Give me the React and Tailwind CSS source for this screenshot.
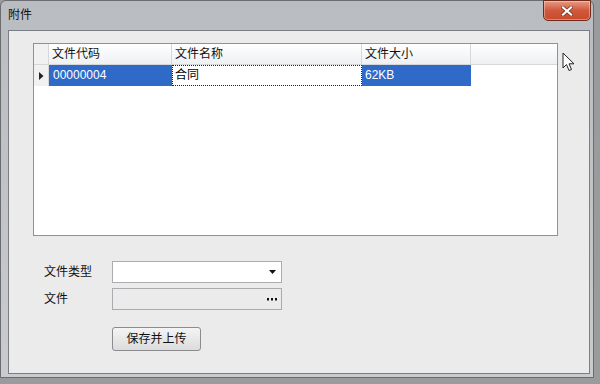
export default function App() {
  const font = { fontFamily: '"Liberation Sans", "Noto Sans CJK SC", sans-serif' };
  return (
    <div className="w-[600px] h-[384px] bg-[#9a9b9d] relative overflow-hidden" style={font}>
      <div className="w-[594px] h-[378px] rounded-t-[6px] border border-[#6a6c70] bg-gradient-to-b from-[#b9bcc0] to-[#c9cbce] flex flex-col">
        {/* title bar */}
        <div className="h-[29px] flex items-start">
          <span className="ml-[7px] mt-[6px] text-[12px] text-[#111] leading-[16px]">附件</span>
          <div className="ml-auto mr-[2px] -mt-[1px] w-[48px] h-[21px] rounded-b-[5px] border border-[#6e2a1c] bg-gradient-to-b from-[#e59a84] via-[#d0583b] to-[#c84a2c] flex items-center justify-center shadow-[inset_0_0_0_1px_rgba(255,255,255,0.35)]">
            <svg width="12" height="10" viewBox="0 0 12 10">
              <path d="M2 1.5 L10 8.5 M10 1.5 L2 8.5" stroke="#7a3020" strokeWidth="3.6" strokeLinecap="square" />
              <path d="M2 1.5 L10 8.5 M10 1.5 L2 8.5" stroke="#ffffff" strokeWidth="2.2" strokeLinecap="square" />
            </svg>
          </div>
        </div>
        {/* client area */}
        <div className="ml-[7px] w-[582px] h-[344px] bg-[#ebebec] border border-[#7b7e82] flex flex-col">
          {/* grid */}
          <div className="ml-[24px] mt-[12px] w-[525px] h-[193px] bg-white border border-[#8e9297] flex flex-col text-[12px]">
            <div className="h-[21px] flex bg-gradient-to-b from-[#ffffff] to-[#eef0f2] border-b border-[#d5d7da]">
              <div className="w-[15px] border-r border-[#d5d7da] bg-[#f1f1f1]" />
              <div className="w-[123px] border-r border-[#d5d7da] pl-[3px] leading-[20px] text-[#111]">文件代码</div>
              <div className="w-[190px] border-r border-[#d5d7da] pl-[3px] leading-[20px] text-[#111]">文件名称</div>
              <div className="w-[109px] border-r border-[#d5d7da] pl-[3px] leading-[20px] text-[#111]">文件大小</div>
              <div className="flex-1" />
            </div>
            <div className="h-[21px] flex">
              <div className="w-[15px] bg-[#f1f1f1] border-r border-[#d5d7da] flex items-center justify-center">
                <svg width="5" height="8" viewBox="0 0 5 8"><path d="M0 0 L4.5 4 L0 8 Z" fill="#222" /></svg>
              </div>
              <div className="w-[123px] bg-[#2f6ac8] text-white pl-[4px] leading-[21px]">00000004</div>
              <div className="w-[190px] bg-white border border-dotted border-[#222] text-black pl-[2px] leading-[19px]">合同</div>
              <div className="w-[109px] bg-[#2f6ac8] text-white pl-[3px] leading-[21px]">62KB</div>
            </div>
          </div>
          {/* form */}
          <div className="mt-[25px] ml-[35px] flex items-center text-[12px] text-[#111]">
            <span className="w-[68px]">文件类型</span>
            <div className="w-[170px] h-[22px] bg-white border border-[#a9abae] flex items-center justify-end pr-[5px]">
              <svg width="7" height="4" viewBox="0 0 7 4"><path d="M0 0 L7 0 L3.5 4 Z" fill="#111" /></svg>
            </div>
          </div>
          <div className="mt-[5px] ml-[35px] flex items-center text-[12px] text-[#111]">
            <span className="w-[68px]">文件</span>
            <div className="w-[170px] h-[22px] bg-[#ebebeb] border border-[#a9abae] flex items-center justify-end pr-[3px]">
              <svg width="11" height="3" viewBox="0 0 11 3">
                <rect x="0" y="0" width="2" height="2.5" fill="#111" />
                <rect x="4" y="0" width="2" height="2.5" fill="#111" />
                <rect x="8" y="0" width="2" height="2.5" fill="#111" />
              </svg>
            </div>
          </div>
          <div className="mt-[17px] ml-[103px]">
            <div className="w-[89px] h-[24px] rounded-[3px] border border-[#8a8c8f] bg-gradient-to-b from-[#f4f4f4] to-[#dcdcdc] flex items-center justify-center text-[12px] text-[#111]">
              保存并上传
            </div>
          </div>
        </div>
      </div>
      {/* mouse cursor */}
      <svg className="absolute left-[562px] top-[52px]" width="14" height="20" viewBox="0 0 14 20">
        <path d="M1 1 L1 16 L4.5 12.5 L7 18.5 L9.5 17.5 L7 11.8 L12 11.8 Z" fill="#fff" stroke="#222" strokeWidth="1" strokeLinejoin="round" />
      </svg>
    </div>
  );
}
